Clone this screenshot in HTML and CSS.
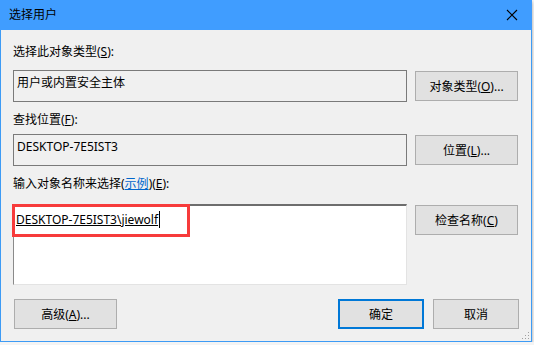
FILE: index.html
```html
<!DOCTYPE html>
<html lang="zh-CN">
<head>
    <meta charset="UTF-8">
    <title>选择用户</title>
    <link rel="stylesheet" href="styles.css">
</head>
<body>
    <div class="window">
        <div class="titlebar">
            <span class="title">选择用户</span>
            <svg class="close" width="12" height="12" viewBox="0 0 12 12">
                <path d="M1 1 L11 11 M11 1 L1 11" stroke="#000" stroke-width="1.1" fill="none"/>
            </svg>
        </div>

        <div class="content">
            <div class="label first">选择此对象类型(<u>S</u>):</div>
            <div class="row">
                <div class="field">用户或内置安全主体</div>
                <button class="btn side">对象类型(<u>O</u>)...</button>
            </div>

            <div class="label">查找位置(<u>F</u>):</div>
            <div class="row">
                <div class="field">DESKTOP-7E5IST3</div>
                <button class="btn side">位置(<u>L</u>)...</button>
            </div>

            <div class="label">输入对象名称来选择(<a href="#">示例</a>)(<u>E</u>):</div>
            <div class="row">
                <div class="names">
                    <span class="name-text">DESKTOP-7E5IST3\jiewolf</span><span class="caret"></span>
                    <div class="highlight"></div>
                </div>
                <button class="btn side">检查名称(<u>C</u>)</button>
            </div>

            <div class="footer">
                <button class="btn wide">高级(<u>A</u>)...</button>
                <div class="spacer"></div>
                <button class="btn small default">确定</button>
                <button class="btn small">取消</button>
            </div>
        </div>
        <div class="grip"></div>
    </div>
</body>
</html>
```

FILE: styles.css
```css
body {
    margin: 0;
    background-color: #f4f4f4;
    font-family: 'Noto Sans', 'Noto Sans CJK SC', sans-serif;
    font-size: 12px;
    color: #000;
}
.window {
    position: relative;
    width: 532px;
    height: 342px;
    box-sizing: border-box;
    border: 1px solid #3d9bf5;
    border-top: none;
    background-color: #f0f0f0;
    box-shadow: 0 2px 3px rgba(0, 0, 0, 0.35);
}
.titlebar {
    height: 30px;
    margin: 0 -1px;
    background-color: #409dff;
    display: flex;
    align-items: center;
    padding: 0 9px;
}
.title {
    flex: 1;
    line-height: 16px;
}
.close {
    margin-right: 5px;
}
.content {
    padding: 0 12px;
}
.label {
    line-height: 16px;
    height: 16px;
    margin-top: 10px;
    margin-bottom: 6px;
}
.label.first {
    margin-top: 14px;
    margin-bottom: 10px;
}
.label a {
    color: #0066cc;
}
.row {
    display: flex;
    gap: 8px;
    align-items: flex-start;
}
.field {
    width: 394px;
    height: 32px;
    box-sizing: border-box;
    border: 1px solid #7a7a7a;
    padding: 4px 3px;
    line-height: 16px;
}
.btn {
    font-family: inherit;
    font-size: 12px;
    color: #000;
    background-color: #e1e1e1;
    border: 1px solid #adadad;
    border-radius: 0;
    height: 30px;
    padding: 0;
    box-sizing: border-box;
}
.side {
    width: 103px;
    margin-top: 1px;
}
.names {
    position: relative;
    width: 394px;
    height: 81px;
    box-sizing: border-box;
    background-color: #fff;
    border: 1px solid #e3e3e3;
    border-top: 2px solid #6d6d6d;
    border-left-color: #8a8a8a;
    padding: 5px 2px;
    line-height: 18px;
    margin-top: 6px;
}
.names + .btn {
    margin-top: 7px;
}
.name-text {
    text-decoration: underline;
}
.caret {
    display: inline-block;
    width: 1px;
    height: 17px;
    background-color: #000;
    vertical-align: -4px;
    margin-left: 1px;
}
.highlight {
    position: absolute;
    left: -2px;
    top: -2px;
    width: 178px;
    height: 33px;
    box-sizing: border-box;
    border: 3px solid #f73b3b;
}
.footer {
    display: flex;
    margin-top: 14px;
}
.spacer {
    flex: 1;
}
.wide {
    width: 103px;
    margin-left: 1px;
}
.small {
    width: 86px;
    margin-left: 9px;
}
.default {
    border: 2px solid #0078d7;
}
.grip {
    position: absolute;
    right: 2px;
    bottom: 2px;
    width: 8px;
    height: 8px;
    background-image: radial-gradient(#a0a0a0 0.8px, transparent 1px);
    background-size: 3px 3px;
    clip-path: polygon(100% 0, 100% 100%, 0 100%);
}
```
